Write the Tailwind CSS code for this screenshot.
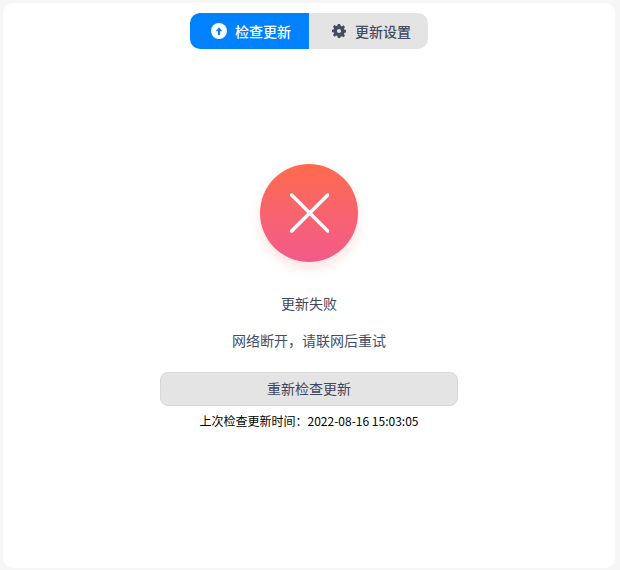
<!DOCTYPE html>
<html lang="zh-CN">
<head>
    <meta charset="UTF-8">
    <title>更新</title>
    <script src="https://cdn.jsdelivr.net/npm/@tailwindcss/browser@4"></script>
</head>
<body class="bg-[#f6f6f6] w-[620px] h-[570px] overflow-hidden pt-[3px] pr-[5px] pb-[2px] pl-[3px] font-['Noto_Sans_CJK_SC','Noto_Sans',sans-serif]">
    <main class="bg-white rounded-[10px] h-[565px] flex flex-col items-center">
        <!-- tabs -->
        <div class="mt-[10px] flex h-[36px] w-[238px] rounded-[10px] overflow-hidden text-[14px] font-medium">
            <button class="w-[119px] pl-[3px] bg-[#0082ff] text-white flex items-center justify-center gap-2">
                <svg class="w-4 h-4" viewBox="0 0 16 16">
                    <circle cx="8" cy="8" r="8" fill="#fff"/>
                    <path d="M8 12V6.500" stroke="#0082ff" stroke-width="2" fill="none"/>
                    <path d="M4.600 8.300 8 4.200l3.400 4.100z" fill="#0082ff"/>
                </svg>
                <span>检查更新</span>
            </button>
            <button class="flex-1 pl-[6px] bg-[#e4e4e4] text-[#454b63] flex items-center justify-center gap-[9px]">
                <svg class="w-[14px] h-[14px]" viewBox="0 0 24 24" fill="#454b63">
                    <path fill-rule="evenodd" d="M10 0h4l.6 3.200 2.200.9L19.500 2.300l2.800 2.800-1.800 2.700.9 2.200 3.200.6v4l-3.200.6-.9 2.200 1.800 2.700-2.800 2.800-2.700-1.800-2.200.9L14 24h-4l-.6-3.200-2.200-.9-2.700 1.800-2.800-2.800 1.800-2.700-.9-2.200L-.6 14v-4l3.200-.6.9-2.200-1.800-2.700 2.800-2.800 2.700 1.800 2.200-.9zM12 8.500a3.500 3.500 0 1 0 0 7 3.500 3.500 0 0 0 0-7z"/>
                </svg>
                <span>更新设置</span>
            </button>
        </div>

        <!-- failed icon -->
        <div class="mt-[115px] w-[98px] h-[98px] rounded-full bg-gradient-to-b from-[#ff6a4b] to-[#f25a8a] shadow-[0_6px_12px_rgba(255,110,100,0.2)] flex items-center justify-center">
            <svg class="w-[40px] h-[40px]" viewBox="0 0 40 40" stroke="#fff" stroke-width="3.500" stroke-linecap="round">
                <path d="M2.700 2 38.700 38M38.700 2 2.700 38"/>
            </svg>
        </div>

        <p class="mt-[29px] text-[14px] leading-[24px] text-[#3f465e]">更新失败</p>
        <p class="mt-[13px] text-[14px] leading-[24px] text-[#3f4e6e]">网络断开，请联网后重试</p>

        <button class="mt-[20px] pb-[1px] w-[298px] h-[34px] rounded-[8px] bg-[#e4e4e4] border border-[#d8d8d8] text-[14px] text-[#3f465e]">重新检查更新</button>
        <p class="mt-[5px] text-[12px] leading-[20px] text-black">上次检查更新时间：2022-08-16 15:03:05</p>
    </main>
</body>
</html>
